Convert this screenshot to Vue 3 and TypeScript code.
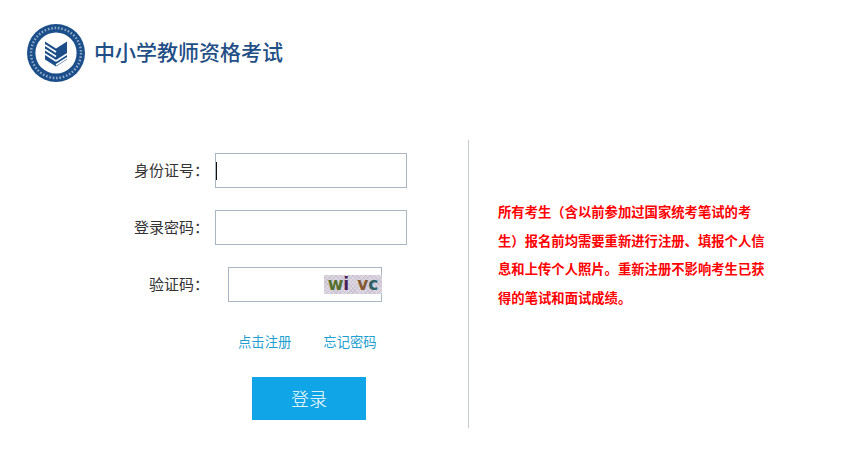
<template>
  <div class="page">
    <header class="brand">
      <svg class="logo" width="60" height="60" viewBox="0 0 60 60" aria-hidden="true">
        <circle cx="30" cy="30" r="29" fill="#1c4f8a" />
        <circle cx="30" cy="30" r="25" fill="none" stroke="#8fabc9" stroke-width="2.4" stroke-dasharray="1.6 1.8" />
        <circle cx="30" cy="30" r="21.8" fill="none" stroke="#1c4f8a" stroke-width="2" />
        <circle cx="30" cy="30" r="20.6" fill="#fff" />
        <path d="M19 18.5 30 25.5 41 18.5V36.5L30 43.5 19 36.5Z" fill="#1c4f8a" />
        <path d="M19 22 30 29M19 26.5 30 33.5M19 31 30 38M30 38 41 31M30 42 41 35" fill="none" stroke="#fff" stroke-width="1.5" />
      </svg>
      <h1 class="brand-title">中小学教师资格考试</h1>
    </header>

    <main class="panel">
      <form class="login" @submit.prevent>
        <div class="row">
          <label class="row-label" for="idcard">身份证号：</label>
          <div class="field">
            <input id="idcard" v-model="idCard" class="text-input" type="text" />
            <span class="caret"></span>
          </div>
        </div>
        <div class="row">
          <label class="row-label" for="pwd">登录密码：</label>
          <input id="pwd" v-model="password" class="text-input" type="password" />
        </div>
        <div class="row">
          <label class="row-label" for="code">验证码：</label>
          <div class="field field-code">
            <input id="code" v-model="code" class="text-input" type="text" />
            <span class="captcha">
              <span v-for="c in captcha" :key="c.ch" class="captcha-ch" :style="{ color: c.color }">{{ c.ch }}</span>
            </span>
          </div>
        </div>
        <div class="links">
          <a class="link" href="#">点击注册</a>
          <a class="link" href="#">忘记密码</a>
        </div>
        <button class="submit" type="submit">登录</button>
      </form>

      <aside class="notice">
        <p>所有考生（含以前参加过国家统考笔试的考生）报名前均需要重新进行注册、填报个人信息和上传个人照片。重新注册不影响考生已获得的笔试和面试成绩。</p>
      </aside>
    </main>
  </div>
</template>

<script setup lang="ts">
import { ref } from 'vue';

const idCard = ref('');
const password = ref('');
const code = ref('');

const captcha = [
  { ch: 'w', color: '#55702f' },
  { ch: 'i', color: '#4a1f5c' },
  { ch: 'v', color: '#85592f' },
  { ch: 'c', color: '#2c5f66' },
];
</script>

<style>
html,
body {
  margin: 0;
  background: #fff;
}
</style>

<style scoped>
.page {
  width: 865px;
  height: 454px;
  overflow: hidden;
  background: #fff;
  font-family: "Noto Sans CJK SC", "Noto Sans", sans-serif;
}

.brand {
  display: flex;
  align-items: center;
  padding: 23px 0 0 26px;
}

.logo {
  flex: none;
}

.brand-title {
  margin: -5px 0 0 8px;
  color: #1f4f86;
  font-size: 21px;
  font-weight: 500;
  line-height: 58px;
}

.panel {
  display: flex;
  margin: 57px 0 0 134px;
  height: 288px;
}

.login {
  width: 335px;
  padding-top: 13px;
  box-sizing: border-box;
  border-right: 1px solid #c9ccd0;
}

.row {
  display: flex;
  align-items: center;
  height: 35px;
  margin-bottom: 22px;
}

.row-label {
  width: 75px;
  margin-right: 6px;
  padding-bottom: 2px;
  color: #333;
  font-size: 15px;
  text-align: right;
}

.field {
  position: relative;
  display: flex;
}

.field-code {
  margin-left: 13px;
}

.text-input {
  width: 192px;
  height: 35px;
  padding: 0;
  box-sizing: border-box;
  border: 1px solid #a9b7c4;
  border-radius: 0;
  outline: none;
  background: #fff;
}

.field-code .text-input {
  width: 154px;
}

.caret {
  position: absolute;
  top: 9px;
  left: 1px;
  width: 1px;
  height: 18px;
  background: #111;
}

.captcha {
  position: absolute;
  top: 8px;
  right: 0;
  display: flex;
  justify-content: center;
  width: 58px;
  height: 19px;
  background:
    repeating-linear-gradient(45deg, rgba(170, 140, 190, 0.22) 0 1px, transparent 1px 3px),
    repeating-linear-gradient(-45deg, rgba(140, 150, 150, 0.2) 0 1px, transparent 1px 3px),
    #ded8e2;
  font-family: "DejaVu Sans", sans-serif;
  font-size: 17px;
  font-weight: 700;
  line-height: 18px;
}

.captcha-ch:nth-child(2) {
  margin-right: 8px;
}

.links {
  display: flex;
  gap: 32px;
  margin: 30px 0 0 104px;
  line-height: 20px;
}

.link {
  color: #1e9fd1;
  font-size: 13.33px;
  text-decoration: none;
}

.submit {
  display: block;
  width: 114px;
  height: 43px;
  margin: 25px 0 0 118px;
  padding: 0 0 2px;
  border: 0;
  background: #10a5e6;
  color: #fff;
  font-family: inherit;
  font-size: 18px;
  font-weight: 300;
}

.notice {
  width: 267px;
  margin-left: 29px;
  padding-top: 58px;
  color: #f00;
  font-size: 13.33px;
  font-weight: 700;
  line-height: 28.7px;
}

.notice p {
  margin: 0;
}
</style>
